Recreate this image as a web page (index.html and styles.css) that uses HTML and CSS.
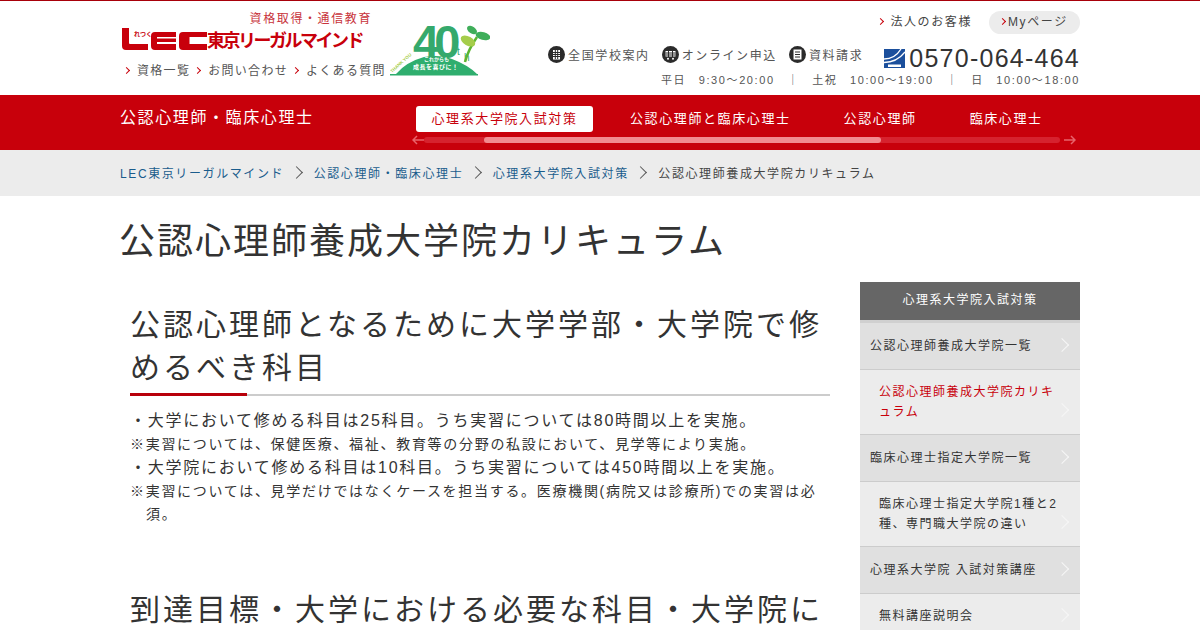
FILE: index.html
```html
<!DOCTYPE html>
<html lang="ja">
<head>
<meta charset="utf-8">
<title>公認心理師養成大学院カリキュラム</title>
<link rel="stylesheet" href="styles.css">
</head>
<body>
<header class="site-header">
  <div class="wrap header-inner">
    <div class="brand">
      <p class="tagline">資格取得・通信教育</p>
      <a class="logo">
        <svg class="logo-mark" width="85" height="23" viewBox="0 0 85 23">
          <path fill="#c8000b" d="M0 0h7v15q0 1 1 1h18v6H4q-4 0-4-4z"/>
          <path fill="#c8000b" d="M29 4h25v5H35v1.500h19v3.500H35V16h19v6H33q-4 0-4-4V8q0-4 4-4z"/>
          <path fill="#c8000b" d="M61 4h24v5H67.500v7H85v6H61q-4 0-4-4V8q0-4 4-4z"/>
          <text x="12" y="8" class="logo-ruby">れつく</text>
        </svg>
        <span class="logo-name">東京リーガルマインド</span>
      </a>
      <ul class="sub-links">
        <li><i class="chev"></i>資格一覧</li>
        <li><i class="chev"></i>お問い合わせ</li>
        <li><i class="chev"></i>よくある質問</li>
      </ul>
    </div>
    <svg class="anniv" width="100" height="52" viewBox="0 0 100 52">
      <path fill="#2fae6e" d="M6 50Q16 38 34 33Q50 30 62 35Q78 41 87 50z"/>
      <path fill="#2fae6e" d="M0 50h88v1.500H0z"/>
      <text x="23" y="34" class="anniv-num">40</text>
      <text x="67" y="31" class="anniv-th">t</text>
      <text x="74" y="37" class="anniv-th">h</text>
      <path fill="none" stroke="#5cb531" stroke-width="2.500" d="M75 38Q78 26 87 13"/>
      <ellipse cx="93" cy="12" rx="7.500" ry="4" fill="#3fae5a" transform="rotate(15 93 12)"/>
      <ellipse cx="82" cy="6" rx="5.500" ry="3.500" fill="#3fae5a" transform="rotate(35 82 6)"/>
      <ellipse cx="78" cy="17" rx="8" ry="4.500" fill="#a5cd4b" transform="rotate(30 78 17)"/>
      <text x="34" y="36.500" class="anniv-small">これからも</text>
      <text x="23" y="45" class="anniv-copy">成長を喜びに！</text>
      <text class="anniv-thanks" transform="translate(2 49) rotate(-42)">THANK YOU</text>
    </svg>
    <div class="contact">
      <div class="contact-top">
        <span class="corp"><i class="chev"></i>法人のお客様</span>
        <span class="mypage"><i class="chev"></i>Myページ</span>
      </div>
      <div class="contact-mid">
        <span class="ico-link">
          <svg class="ico" width="17" height="17" viewBox="0 0 17 17"><circle cx="8.500" cy="8.500" r="8.500" fill="#2b2b2b"/><path fill="#fff" d="M5 4h7v9.500H5z"/><path stroke="#2b2b2b" fill="none" d="M5 6.500h7M5 8.500h7M5 10.500h7M7.300 4v9M9.700 4v9"/></svg>
          全国学校案内
        </span>
        <span class="ico-link">
          <svg class="ico" width="17" height="17" viewBox="0 0 17 17"><circle cx="8.500" cy="8.500" r="8.500" fill="#2b2b2b"/><path fill="#fff" d="M3.500 5h10v5.500h-10z"/><path stroke="#2b2b2b" fill="none" d="M3.500 7h10M3.500 9h10M6.500 5v6M10.500 5v6"/><circle cx="6" cy="12.800" r="1" fill="#fff"/><circle cx="11" cy="12.800" r="1" fill="#fff"/></svg>
          オンライン申込
        </span>
        <span class="ico-link">
          <svg class="ico" width="17" height="17" viewBox="0 0 17 17"><circle cx="8.500" cy="8.500" r="8.500" fill="#2b2b2b"/><path fill="#fff" d="M4.500 3.500h8v10h-8z"/><path stroke="#2b2b2b" fill="none" d="M6 6h5M6 8.500h5M6 11h5"/></svg>
          資料請求
        </span>
        <span class="phone">
          <svg class="dial" width="21" height="19" viewBox="0 0 21 19"><path fill="#1b4f9c" d="M0 0h21v19H0z"/><path fill="none" stroke="#fff" stroke-width="1.300" d="M0 10Q11 10 17 0M0 13.500Q13 13.500 21 3"/><path fill="#fff" d="M4 15.500h13V18H4z"/></svg>
          <span class="phone-num">0570-064-464</span>
        </span>
      </div>
      <p class="hours"><span>平日</span><span>9:30～20:00</span><span>｜</span><span>土祝</span><span>10:00～19:00</span><span>｜</span><span>日</span><span>10:00～18:00</span></p>
    </div>
  </div>
</header>

<nav class="global-nav">
  <div class="wrap nav-inner">
    <p class="nav-title">公認心理師・臨床心理士</p>
    <div class="nav-scroll">
      <ul class="tabs">
        <li class="tab tab-on">心理系大学院入試対策</li>
        <li class="tab">公認心理師と臨床心理士</li>
        <li class="tab">公認心理師</li>
        <li class="tab">臨床心理士</li>
      </ul>
      <div class="scrollbar">
        <svg width="12" height="10" viewBox="0 0 12 10"><path fill="none" stroke="#e8636b" stroke-width="1.500" d="M12 5H1M5 1 1 5l4 4"/></svg>
        <div class="track"><div class="thumb"></div></div>
        <svg width="12" height="10" viewBox="0 0 12 10"><path fill="none" stroke="#e8636b" stroke-width="1.500" d="M0 5h11M7 1l4 4-4 4"/></svg>
      </div>
    </div>
  </div>
</nav>

<div class="crumbs">
  <ol class="wrap crumb-list">
    <li class="crumb-link">LEC東京リーガルマインド</li>
    <li class="crumb-link">公認心理師・臨床心理士</li>
    <li class="crumb-link">心理系大学院入試対策</li>
    <li class="crumb-now">公認心理師養成大学院カリキュラム</li>
  </ol>
</div>

<div class="wrap">
  <h1 class="page-title">公認心理師養成大学院カリキュラム</h1>
  <div class="columns">
    <main class="content">
      <h2 class="sec-title">公認心理師となるために大学学部・大学院で修めるべき科目</h2>
      <ul class="notes">
        <li class="lead">・大学において修める科目は25科目。うち実習については80時間以上を実施。</li>
        <li class="note">※実習については、保健医療、福祉、教育等の分野の私設において、見学等により実施。</li>
        <li class="lead">・大学院において修める科目は10科目。うち実習については450時間以上を実施。</li>
        <li class="note">※実習については、見学だけではなくケースを担当する。医療機関(病院又は診療所)での実習は必須。</li>
      </ul>
      <h2 class="sec-title sec-next">到達目標・大学における必要な科目・大学院における必要な科目</h2>
    </main>
    <aside class="side">
      <p class="side-head">心理系大学院入試対策</p>
      <ul class="side-list">
        <li class="side-item side-top">公認心理師養成大学院一覧</li>
        <li class="side-item side-sub side-on">公認心理師養成大学院カリキュラム</li>
        <li class="side-item side-top">臨床心理士指定大学院一覧</li>
        <li class="side-item side-sub">臨床心理士指定大学院1種と2種、専門職大学院の違い</li>
        <li class="side-item side-top">心理系大学院 入試対策講座</li>
        <li class="side-item side-sub">無料講座説明会</li>
      </ul>
    </aside>
  </div>
</div>
</body>
</html>
```
FILE: styles.css
```css
* { box-sizing: border-box; }
html { overflow: hidden; height: 630px; }
body {
  margin: 0;
  color: #333;
  font-family: "Liberation Sans", "Noto Sans CJK JP", sans-serif;
  letter-spacing: 1.6px;
  background: #fff;
}
p, ul, ol, h1, h2 { margin: 0; padding: 0; font-weight: 400; }
ul, ol { list-style: none; }
.wrap { width: 960px; margin: 0 auto; }

.site-header { height: 95px; border-top: 1px solid #a8000a; }
.header-inner { display: flex; align-items: flex-start; }
.brand { width: 270px; padding: 11px 0 0 2px; flex: none; }
.tagline { font-size: 12px; line-height: 15px; color: #c8333b; text-align: right; width: 250px; letter-spacing: 1.6px; }
.logo { display: flex; align-items: flex-end; height: 23px; margin-top: 1px; }
.logo-mark { flex: none; }
.logo-ruby { font-size: 6px; font-weight: 700; fill: #c8000b; letter-spacing: 0; }
.logo-name { font-size: 18px; line-height: 20px; font-weight: 700; color: #c8000b; letter-spacing: -2.5px; white-space: nowrap; }
.sub-links { display: flex; gap: 3px; margin-top: 11px; font-size: 12px; line-height: 18px; color: #555; white-space: nowrap; letter-spacing: 1.3px; }
.chev { display: inline-block; width: 5px; height: 5px; margin: 0 7px 2px 1px; border-top: 1px solid #c8000b; border-right: 1px solid #c8000b; transform: rotate(45deg); }
.sub-links .chev { margin: 0 8px 2px 2px; }

.anniv { flex: none; margin: 23px 0 0; }
.anniv-num { font-size: 47px; font-weight: 700; fill: #35a96c; letter-spacing: -5px; }
.anniv-th { font-size: 10px; fill: #35a96c; letter-spacing: 0; }
.anniv-small { font-size: 5px; fill: #fff; font-weight: 700; letter-spacing: 0; }
.anniv-copy { font-size: 6px; fill: #fff; font-weight: 700; letter-spacing: .5px; }
.anniv-thanks { font-size: 4.500px; fill: #a5cd4b; font-weight: 700; letter-spacing: 0; }

.contact { flex: 1; padding-top: 10px; display: flex; flex-direction: column; align-items: flex-end; color: #444; }
.contact-top { display: flex; align-items: center; font-size: 12px; line-height: 23px; }
.corp { margin-right: 17px; }
.mypage { width: 91px; height: 23px; padding-left: 10px; border-radius: 12px; background: #ececec; font-size: 12px; white-space: nowrap; }
.mypage .chev { margin-right: 3px; }
.contact-mid { display: flex; align-items: center; height: 30px; margin-top: 9px; font-size: 12px; white-space: nowrap; }
.ico-link { display: flex; align-items: center; gap: 3px; margin-right: 12px; margin-top: -7px; color: #555; }
.ico { flex: none; }
.phone { display: flex; align-items: center; gap: 4px; margin-left: 9px; }
.phone-num { font-size: 25px; line-height: 30px; letter-spacing: .05em; color: #333; }
.hours { display: flex; font-size: 11px; line-height: 16px; margin-top: -1px; color: #555; white-space: nowrap; letter-spacing: 1.6px; }
.hours span { margin-left: 12.500px; }

.global-nav { height: 55px; background: #c8000b; color: #fff; }
.nav-inner { display: flex; justify-content: space-between; }
.nav-title { font-size: 16px; line-height: 45px; }
.nav-scroll { width: 664px; padding-top: 11px; margin-right: 4px; }
.tabs { display: flex; padding-left: 4px; font-size: 13px; letter-spacing: 1.6px; white-space: nowrap; }
.tab { flex: none; height: 26px; line-height: 26px; margin-right: 53px; }
.tab-on { width: 177px; margin-right: 37px; border-radius: 3px; background: #fff; color: #c8000b; text-align: center; }
.scrollbar { display: flex; align-items: center; margin-top: 3px; }
.track { flex: 1; height: 6px; padding-left: 60px; border-radius: 3px; background: #d6222e; margin: 0 4px 0 0; }
.thumb { width: 397px; height: 6px; border-radius: 3px; background: #f28b90; }

.crumbs { height: 46px; background: #ececec; }
.crumb-list { display: flex; align-items: center; height: 44px; font-size: 12px; letter-spacing: 1.6px; white-space: nowrap; }
.crumb-link { color: #1a5c8c; }
.crumb-link::after { content: ""; display: inline-block; width: 8px; height: 8px; margin: 0 13px 1px 7.500px; border-top: 1px solid #555; border-right: 1px solid #555; transform: rotate(45deg); }
.crumb-now { color: #444; }

.page-title { font-size: 36px; line-height: 50px; letter-spacing: 2px; margin: 21px 0 0 -1px; }
.columns { display: grid; grid-template-columns: 710px 220px; justify-content: space-between; margin-top: 15px; }
.content { padding-left: 10px; }
.sec-title { position: relative; font-size: 30px; line-height: 43px; letter-spacing: 3px; padding: 21px 0 5px; border-bottom: 2px solid #ccc; }
.sec-title::after { content: ""; position: absolute; left: 0; bottom: -2px; width: 117px; height: 3px; background: #b8000a; }
.sec-next { margin-top: 41px; border-bottom: 0; }
.notes { margin-top: 13px; }
.lead { font-size: 16px; line-height: 24px; letter-spacing: 1.75px; }
.note { font-size: 14px; line-height: 23px; padding-left: 16px; text-indent: -16px; letter-spacing: 1.7px; }

.side-head { height: 38px; line-height: 36px; background: #666; color: #fff; font-size: 12px; letter-spacing: 1.5px; text-align: center; }
.side-list { padding-top: 3px; background: linear-gradient(#d0d0d0 3px, transparent 3px); font-size: 12px; letter-spacing: 1.5px; line-height: 19.500px; }
.side-item { position: relative; border-bottom: 1px solid #ccc; padding: 13.500px 20px 12.500px 10px; }
.side-item::after { content: ""; position: absolute; right: 13px; bottom: 19px; width: 9px; height: 9px; border-top: 1.500px solid #f6f6f6; border-right: 1.500px solid #f6f6f6; transform: rotate(45deg); }
.side-top { background: #e0e0e0; }
.side-sub { background: #ececec; padding-left: 19px; padding-top: 13.500px; padding-bottom: 12px; }
.side-on { color: #c8000b; }
```
